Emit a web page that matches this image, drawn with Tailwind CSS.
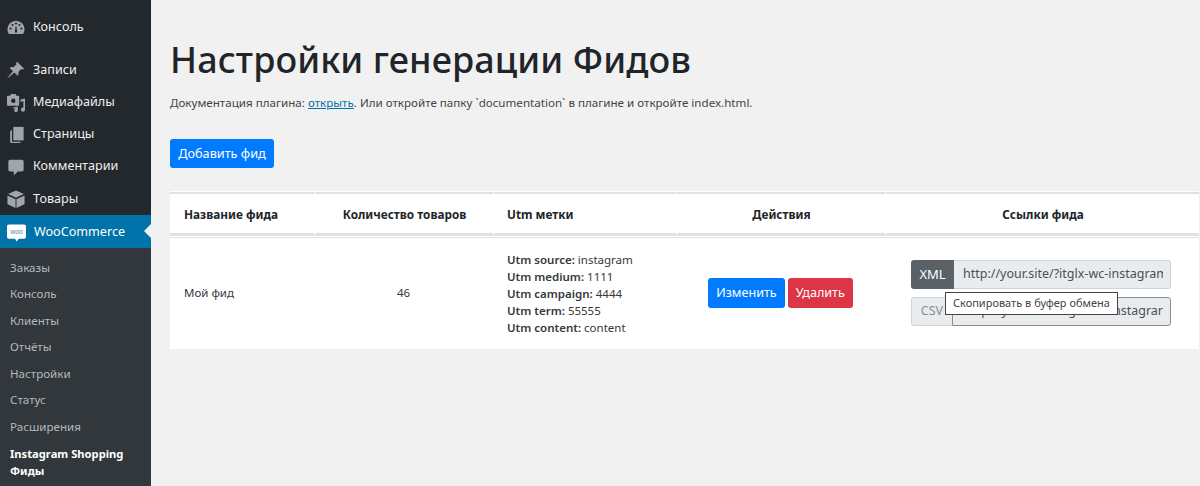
<!DOCTYPE html>
<html lang="ru">
<head>
  <meta charset="UTF-8" />
  <title>Настройки генерации Фидов</title>
  <script src="https://cdn.jsdelivr.net/npm/@tailwindcss/browser@4"></script>
</head>
<body class="bg-[#f1f1f1] text-[#212529] font-['Noto_Sans',sans-serif] overflow-hidden">
  <div class="flex h-[486px] w-[1200px] overflow-hidden">

    <!-- Sidebar -->
    <aside class="w-[151px] shrink-0 bg-[#23282d] text-[#eeeeee] text-[12.6px]">
      <div class="pt-[11px]">
        <a class="flex items-center h-[32px] pl-[7px] gap-[8px]">
          <svg class="w-[18px] h-[18px] text-[#a0a5aa]" viewBox="0 0 20 20" fill="currentColor"><path d="M10 3a9.500 9.500 0 0 0-9.500 9.500c0 2 .6 3.800 1.700 5.300h15.600a9.500 9.500 0 0 0 1.700-5.300A9.500 9.500 0 0 0 10 3zM4 13a1.200 1.200 0 1 1 0-2.400A1.200 1.200 0 0 1 4 13zm2.200-4a1.200 1.200 0 1 1 0-2.400 1.200 1.200 0 0 1 0 2.400zM10 7.300a1.200 1.200 0 1 1 0-2.400 1.200 1.200 0 0 1 0 2.400zm1.300 8.700H8.700l.7-6 .6-1.200.6 1.200zm2.500-7a1.200 1.200 0 1 1 0-2.400 1.200 1.200 0 0 1 0 2.400zm2.200 4a1.200 1.200 0 1 1 0-2.400 1.200 1.200 0 0 1 0 2.400z"/></svg>
          <span>Консоль</span>
        </a>
      </div>
      <div class="mt-[11px]">
        <a class="flex items-center h-[32px] pl-[7px] gap-[8px]">
          <svg class="w-[18px] h-[18px] text-[#a0a5aa]" viewBox="0 0 20 20" fill="currentColor"><path d="M11.500 1l7.500 7.500-1.300 1-1.700-.6-3.400 3.400c.5 1.700.2 3.200-.8 4.200L8.200 12.900 1 19l-.5-.5 6.100-7.200-3.600-3.600c1-1 2.500-1.300 4.200-.8l3.400-3.400-.6-1.700z"/></svg>
          <span>Записи</span>
        </a>
        <a class="flex items-center h-[32px] pt-[1px] pl-[7px] gap-[8px]">
          <svg class="w-[18px] h-[18px] text-[#a0a5aa]" viewBox="0 0 20 20" fill="currentColor"><path fill-rule="evenodd" d="M4.500 0h5l1 2h2a1 1 0 0 1 1 1v9a1 1 0 0 1-1 1H1a1 1 0 0 1-1-1V3a1 1 0 0 1 1-1h2.500zM7 5a2.500 2.500 0 1 0 0 5 2.500 2.500 0 0 0 0-5z"/><path d="M15 6l5-1v12.300a2.300 2.300 0 1 1-1.800-2.200V8l-3.200.6zM7 15l5-1v4a2 2 0 1 1-1.600-1.900V15.800l-3.400.7z"/></svg>
          <span>Медиафайлы</span>
        </a>
        <a class="flex items-center h-[32px] pt-[1px] pl-[7px] gap-[8px]">
          <svg class="w-[18px] h-[18px] text-[#a0a5aa]" viewBox="0 0 20 20" fill="currentColor"><path d="M7 1h11.500v15H7z"/><path d="M5.500 4v13.500H15V19H5a1.500 1.500 0 0 1-1.500-1.500V6z"/></svg>
          <span>Страницы</span>
        </a>
        <a class="flex items-center h-[32px] pt-[1px] pl-[7px] gap-[8px]">
          <svg class="w-[18px] h-[18px] text-[#a0a5aa]" viewBox="0 0 20 20" fill="currentColor"><path d="M3.500 2h13a2 2 0 0 1 2 2v9a2 2 0 0 1-2 2H12l-4.500 4.500V15h-4a2 2 0 0 1-2-2V4a2 2 0 0 1 2-2z"/></svg>
          <span>Комментарии</span>
        </a>
        <a class="flex items-center h-[33px] pt-[1px] pl-[7px] gap-[8px]">
          <svg class="w-[18px] h-[18px] text-[#a0a5aa]" viewBox="0 0 20 20" fill="currentColor"><path d="M10 .5l8.800 4L10 8.500 1.200 4.500z"/><path d="M.5 6l9 4.200V20l-9-4.300zM19.500 6v9.700l-9 4.300v-9.800z"/></svg>
          <span>Товары</span>
        </a>
        <a class="relative flex items-center h-[33px] pt-[1px] pl-[7px] gap-[8px] bg-[#0073aa] text-white">
          <svg class="w-[19px] h-[19px]" viewBox="0 0 20 20"><path fill="#fff" d="M2 1.500h16a2 2 0 0 1 2 2v11a2 2 0 0 1-2 2h-5.500l-2.500 3-1.500-3H2a2 2 0 0 1-2-2v-11a2 2 0 0 1 2-2z"/><text x="10" y="11.500" text-anchor="middle" font-size="7" font-family="Liberation Sans, sans-serif" fill="#3f87b5">woo</text></svg>
          <span>WooCommerce</span>
          <span class="absolute right-0 top-[9px] border-y-[7px] border-r-[7px] border-y-transparent border-r-[#f1f1f1]"></span>
        </a>
      </div>
      <ul class="bg-[#32373c] text-[#b4b9be] text-[11.6px] pt-[6px] pb-[30px] pl-[10px]">
        <li class="h-[26.500px] flex items-center">Заказы</li>
        <li class="h-[26.500px] flex items-center">Консоль</li>
        <li class="h-[26.500px] flex items-center">Клиенты</li>
        <li class="h-[26.500px] flex items-center">Отчёты</li>
        <li class="h-[26.500px] flex items-center">Настройки</li>
        <li class="h-[26.500px] flex items-center">Статус</li>
        <li class="h-[26.500px] flex items-center">Расширения</li>
        <li class="font-bold text-white text-[11.2px] leading-[17px] pt-[5px]">Instagram Shopping<br>Фиды</li>
      </ul>
    </aside>

    <!-- Content -->
    <main class="flex-1 min-w-0 pl-[19px] pt-[33px]">
      <h1 class="text-[36px] tracking-[0.1px] leading-[54px] font-medium text-[#212529]">Настройки генерации Фидов</h1>
      <p class="mt-[7px] text-[11.6px] leading-[18px] text-[#444]">Документация плагина: <a class="text-[#0073aa] underline">открыть</a>. Или откройте папку `documentation` в плагине и откройте index.html.</p>
      <button class="mt-[27px] block h-[29px] w-[104px] bg-[#007bff] text-white text-[12.7px] rounded-[3px]">Добавить фид</button>

      <table class="mt-[23px] w-[1029px] bg-white border-separate border-spacing-x-0 border-spacing-y-[1px] text-[11.5px] table-fixed">
        <thead>
          <tr class="text-[11.8px] text-[#212529]">
            <th class="w-[144px] h-[44px] pt-[2px] border-t-2 border-b-[3px] border-[#dee2e6] text-left pl-[14px] font-bold">Название фида</th>
            <th class="w-[179px] pt-[2px] border-t-2 border-b-[3px] border-l-2 border-[#dee2e6] border-l-white font-bold">Количество товаров</th>
            <th class="w-[183px] pt-[2px] border-t-2 border-b-[3px] border-l-2 border-[#dee2e6] border-l-white text-left pl-[12px] font-bold">Utm метки</th>
            <th class="w-[209px] pt-[2px] border-t-2 border-b-[3px] border-l-2 border-[#dee2e6] border-l-white font-bold">Действия</th>
            <th class="pt-[2px] border-t-2 border-b-[3px] border-l-2 border-[#dee2e6] border-l-white font-bold">Ссылки фида</th>
          </tr>
        </thead>
        <tbody>
          <tr class="text-[#33383d]">
            <td class="border-t border-[#dee2e6] h-[111px] pl-[14px]">Мой фид</td>
            <td class="border-t border-[#dee2e6] text-center">46</td>
            <td class="border-t border-[#dee2e6] pl-[14px] leading-[17px]">
              <div><b class="font-semibold">Utm source:</b> instagram</div>
              <div><b class="font-semibold">Utm medium:</b> 1111</div>
              <div><b class="font-semibold">Utm campaign:</b> 4444</div>
              <div><b class="font-semibold">Utm term:</b> 55555</div>
              <div><b class="font-semibold">Utm content:</b> content</div>
            </td>
            <td class="border-t border-[#dee2e6]">
              <div class="flex justify-center gap-[3px] text-white text-[12.6px]">
                <button class="h-[30px] px-[8px] bg-[#007bff] rounded-[3px]">Изменить</button>
                <button class="h-[30px] px-[8px] bg-[#dc3545] rounded-[3px]">Удалить</button>
              </div>
            </td>
            <td class="border-t border-[#dee2e6] pl-[26px]">
              <div class="relative w-[260px] text-[12.5px] text-[#495057]">
                <div class="flex h-[29px]">
                  <span class="w-[43px] shrink-0 flex items-center justify-center bg-[#5a6268] text-white text-[13px] rounded-l-[3px]">XML</span>
                  <span class="flex-1 min-w-0 overflow-hidden whitespace-nowrap flex items-center pl-[9px] pr-[7px] bg-[#e9ecef] border border-[#ced4da] border-l-0 rounded-r-[3px]"><span class="block w-full overflow-hidden">http://your.site/?itglx-wc-instagram</span></span>
                </div>
                <div class="flex h-[29px] mt-[8px]">
                  <span class="w-[41px] shrink-0 flex items-center justify-center bg-[#e9ecef] text-[#868e96] border border-[#ced4da] border-r-0 rounded-l-[3px]">CSV</span>
                  <span class="flex-1 min-w-0 overflow-hidden whitespace-nowrap flex items-center justify-end pr-[7px] bg-[#e9ecef] border border-[#868e96] rounded-r-[3px]">http://your.site/?itglx-wc-instagrar</span>
                </div>
                <div class="absolute left-[34px] top-[32px] h-[23px] px-[7px] flex items-center whitespace-nowrap bg-white border border-[#444] text-[11px] text-[#444]">Скопировать в буфер обмена</div>
              </div>
            </td>
          </tr>
        </tbody>
      </table>
    </main>
  </div>
</body>
</html>
